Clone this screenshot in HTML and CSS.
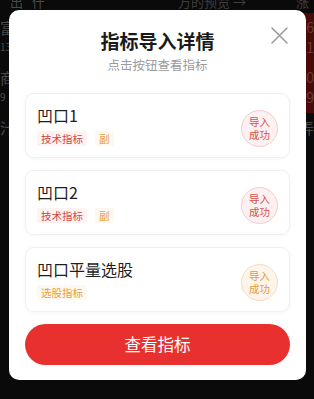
FILE: index.html
```html
<!DOCTYPE html>
<html lang="zh-CN">
<head>
<meta charset="utf-8">
<title>指标导入详情</title>
<link rel="stylesheet" href="styles.css">
</head>
<body>
<div class="page">
  <div class="topbar">
    <span class="tb-left">出 &nbsp;&nbsp;什</span>
    <span class="tb-mid">万的预览 →</span>
    <span class="tb-right">涨</span>
  </div>
  <div class="row">
    <div class="row-left"><span class="big">富</span><span class="small">13</span></div>
    <div class="row-right red"><span>6</span><span>1</span></div>
  </div>
  <div class="row">
    <div class="row-left"><span class="big">商</span><span class="small">9</span></div>
    <div class="row-right red"><span>0</span><span>9</span></div>
  </div>
  <div class="row">
    <div class="row-left"><span class="big">汁</span></div>
    <div class="row-right"><span class="big">弄</span></div>
  </div>
</div>

<div class="modal">
  <svg class="close" width="17" height="17" viewBox="0 0 17 17" aria-hidden="true">
    <path d="M1 1 L16 16 M16 1 L1 16" stroke="#9a9a9a" stroke-width="1.5" stroke-linecap="round" fill="none"/>
  </svg>
  <h1 class="title">指标导入详情</h1>
  <p class="subtitle">点击按钮查看指标</p>

  <div class="list">
    <div class="card">
      <div class="info">
        <div class="name">凹口1</div>
        <div class="tags">
          <span class="tag tag-red">技术指标</span>
          <span class="tag tag-orange">副</span>
        </div>
      </div>
      <div class="stamp stamp-red"><span>导入</span><span>成功</span></div>
    </div>
    <div class="card">
      <div class="info">
        <div class="name">凹口2</div>
        <div class="tags">
          <span class="tag tag-red">技术指标</span>
          <span class="tag tag-orange">副</span>
        </div>
      </div>
      <div class="stamp stamp-red"><span>导入</span><span>成功</span></div>
    </div>
    <div class="card">
      <div class="info">
        <div class="name">凹口平量选股</div>
        <div class="tags">
          <span class="tag tag-orange">选股指标</span>
        </div>
      </div>
      <div class="stamp stamp-orange"><span>导入</span><span>成功</span></div>
    </div>
  </div>

  <button class="btn">查看指标</button>
</div>
</body>
</html>
```

FILE: styles.css
```css
* { box-sizing: border-box; }
html, body {
  margin: 0;
  padding: 0;
  width: 314px;
  height: 399px;
  overflow: hidden;
  background: #0a0a0a;
  font-family: "Noto Sans CJK SC", "Noto Sans", sans-serif;
}

/* dimmed page behind the mask */
.page {
  color: #4a4a4a;
}
.topbar {
  height: 18px;
  display: flex;
  align-items: flex-end;
  font-size: 13px;
  line-height: 14px;
  margin-top: -5px;
  padding: 0 0 4px 10px;
}
.tb-left { width: 168px; }
.tb-mid { width: 118px; color: #3e3e3e; }
.tb-right { color: #3e3e3e; }
.row {
  height: 50px;
  display: flex;
  justify-content: space-between;
}
.row-left, .row-right {
  display: flex;
  flex-direction: column;
  align-items: flex-start;
  padding-top: 4px;
}
.row-right {
  width: 14px;
  align-items: flex-end;
  font-size: 14px;
  line-height: 20px;
}
.row-right.red {
  background: #4a0a0a;
  color: #6b3a3a;
}
.big { font-size: 15px; line-height: 22px; }
.small { font-size: 10px; line-height: 16px; }

/* modal */
.modal {
  position: absolute;
  left: 9px;
  top: 10px;
  width: 297px;
  height: 370px;
  background: #fff;
  border-radius: 10px;
  padding: 18px 16px 16px;
  display: flex;
  flex-direction: column;
}
.close {
  position: absolute;
  right: 18px;
  top: 17px;
}
.title {
  margin: 0;
  text-align: center;
  font-size: 19px;
  line-height: 26px;
  font-weight: 700;
  color: #1a1a1a;
}
.subtitle {
  margin: 2px 0 0;
  text-align: center;
  font-size: 12.5px;
  line-height: 18px;
  color: #9a9a9a;
}
.list {
  margin-top: 19px;
  display: flex;
  flex-direction: column;
  gap: 12px;
}
.card {
  height: 65px;
  border: 1px solid #f0f0f0;
  border-radius: 9px;
  box-shadow: 0 1px 4px rgba(0, 0, 0, 0.04);
  padding: 10px 11px 11px 11px;
  display: flex;
  align-items: center;
  justify-content: space-between;
}
.info {
  display: flex;
  flex-direction: column;
  align-self: stretch;
}
.name {
  font-size: 16px;
  line-height: 22px;
  color: #1e1e1e;
}
.tags {
  margin-top: 5px;
  display: flex;
  gap: 8px;
}
.tag {
  font-size: 10.5px;
  line-height: 15px;
  height: 15px;
  padding: 0 4px;
  border-radius: 2px;
}
.tag-red { color: #d4443e; background: #fdf3f3; }
.tag-orange { color: #e6a13e; background: #fdf8f0; }

.stamp {
  width: 37px;
  height: 37px;
  border-radius: 50%;
  margin-top: 6px;
  font-size: 10.5px;
  line-height: 13px;
  text-align: center;
  display: flex;
  flex-direction: column;
  align-items: center;
  justify-content: center;
}
.stamp span { display: block; height: 13px; }
.stamp-red {
  color: #d4524d;
  background: #fdf0f0;
  border: 1px solid #f3cdcd;
}
.stamp-orange {
  color: #e29a48;
  background: #fdf4ea;
  border: 1px solid #f3dcc4;
}

.btn {
  margin-top: 12px;
  height: 41px;
  border: none;
  border-radius: 21px;
  background: #e8312f;
  color: #fff;
  font-family: inherit;
  font-size: 16.5px;
  line-height: 41px;
  padding: 0;
}
```
